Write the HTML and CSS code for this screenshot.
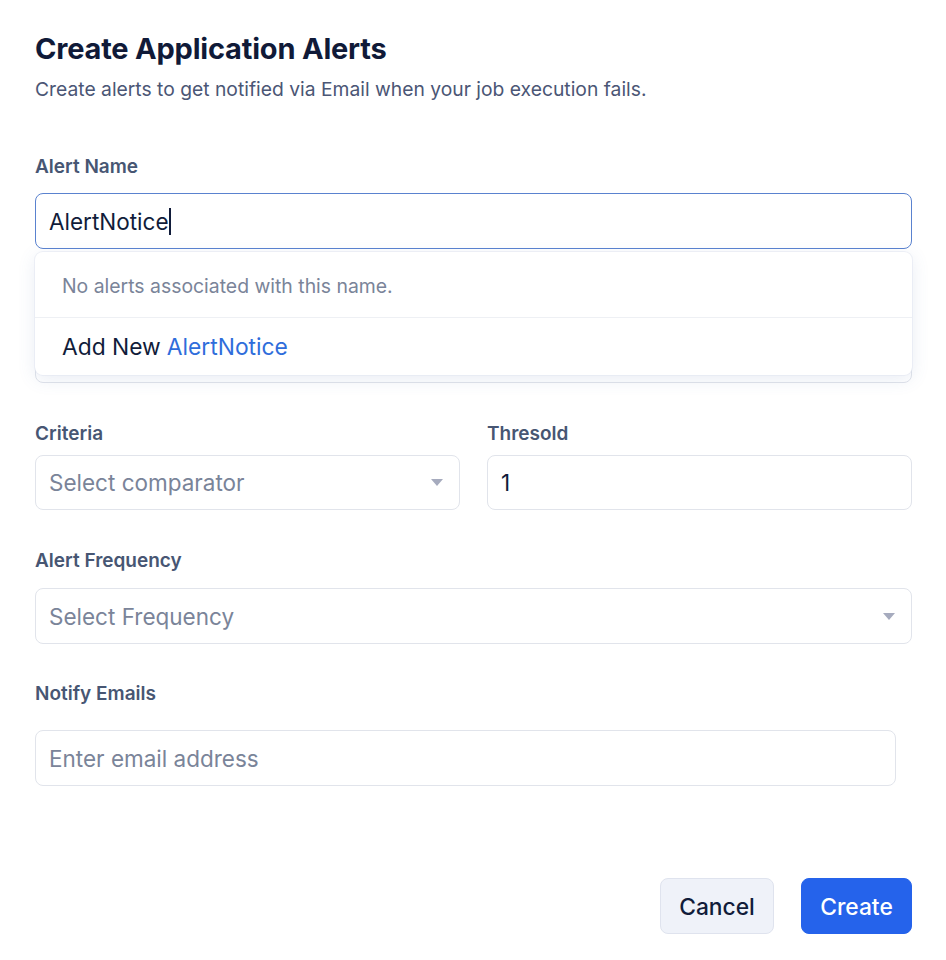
FILE: index.html
```html
<!DOCTYPE html>
<html>
<head>
<meta charset="utf-8">
<link rel="stylesheet" href="styles.css">
</head>
<body>
<div class="page">
  <header class="head">
    <h1 class="title">Create Application Alerts</h1>
    <p class="subtitle">Create alerts to get notified via Email when your job execution fails.</p>
  </header>

  <div class="field name-field">
    <label class="label">Alert Name</label>
    <div class="input focused"><span class="value">AlertNotice</span><span class="caret"></span></div>
    <div class="dropdown">
      <div class="dd-row dd-empty">No alerts associated with this name.</div>
      <div class="dd-row dd-add">Add New <span class="dd-name">AlertNotice</span></div>
    </div>
  </div>

  <div class="field hidden-field">
    <div class="input"></div>
  </div>

  <div class="row">
    <div class="field criteria">
      <label class="label">Criteria</label>
      <div class="input select"><span class="placeholder">Select comparator</span><span class="arrow"></span></div>
    </div>
    <div class="field threshold">
      <label class="label">Thresold</label>
      <div class="input"><span class="value">1</span></div>
    </div>
  </div>

  <div class="field freq">
    <label class="label">Alert Frequency</label>
    <div class="input select"><span class="placeholder">Select Frequency</span><span class="arrow"></span></div>
  </div>

  <div class="field emails">
    <label class="label">Notify Emails</label>
    <div class="input email-input"><span class="placeholder">Enter email address</span></div>
  </div>

  <div class="actions">
    <button class="btn btn-cancel">Cancel</button>
    <button class="btn btn-create">Create</button>
  </div>
</div>
</body>
</html>
```
FILE: styles.css
```css
* { box-sizing: border-box; }
html, body { margin: 0; padding: 0; background: #ffffff; }
body { font-family: Inter, "Noto Sans", "Liberation Sans", sans-serif; color: #111c3a; }

.page { padding: 31px 34px 0 35px; width: 946px; }

.title { margin: 0; font-size: 29px; font-weight: 700; line-height: 36px; color: #101a38; letter-spacing: -0.2px; }
.subtitle { margin: 9px 0 0; font-size: 19.3px; line-height: 26px; color: #4b5675; }

.field { display: flex; flex-direction: column; }
.label { font-size: 19px; font-weight: 600; color: #475673; line-height: 24px; }

.input {
  height: 56px; border: 1px solid #e1e4eb; border-radius: 8px; background: #fff;
  display: flex; align-items: center; padding: 0 13px; font-size: 22.5px;
}
.input.focused { border-color: #5a82cf; }
.value { color: #111c3a; }
.placeholder { color: #7a8499; }
.caret { width: 2px; height: 27px; background: #111c3a; margin-left: 0; }

.name-field { margin-top: 53px; position: relative; }
.name-field .label { margin-bottom: 14px; }

.dropdown {
  position: absolute; left: 0; right: 0; top: 97px; z-index: 2;
  background: #fff; border-radius: 8px;
  box-shadow: 0 0 0 1px rgba(225,230,240,0.55), 0 4px 18px rgba(80,110,170,0.13);
}
.dd-row { display: flex; align-items: center; padding: 0 27px; }
.dd-empty { height: 66px; font-size: 19.4px; color: #7a8499; border-bottom: 1px solid #eef0f4; padding-top: 2px; }
.dd-add { height: 57px; font-size: 22.8px; color: #111c3a; }
.dd-name { color: #2f6ddb; margin-left: 6px; }

.hidden-field { margin-top: 78px; }

.row { display: flex; gap: 27px; margin-top: 39px; }
.row .field { flex: 1; }
.row .label { margin-bottom: 9px; }
.row .input { height: 55px; }

.select { justify-content: space-between; padding-right: 16px; }
.arrow {
  width: 0; height: 0; border-left: 6px solid transparent; border-right: 6px solid transparent;
  border-top: 7px solid #a6abbe;
}

.freq { margin-top: 39px; }
.freq .label { margin-bottom: 15px; }

.emails { margin-top: 38px; }
.emails .label { margin-bottom: 24px; }
.email-input { width: 861px; }

.actions { display: flex; justify-content: flex-end; gap: 27px; margin-top: 92px; }
.btn {
  height: 56px; border-radius: 8px; font-family: Inter, "Noto Sans", "Liberation Sans", sans-serif;
  font-size: 22.8px; font-weight: 500; padding: 0; cursor: pointer;
}
.btn-cancel { background: #eff2f9; border: 1px solid #dfe3ee; color: #111c3a; width: 114px; }
.btn-create { background: #2563eb; border: 1px solid #2563eb; color: #fff; width: 111px; }
```
